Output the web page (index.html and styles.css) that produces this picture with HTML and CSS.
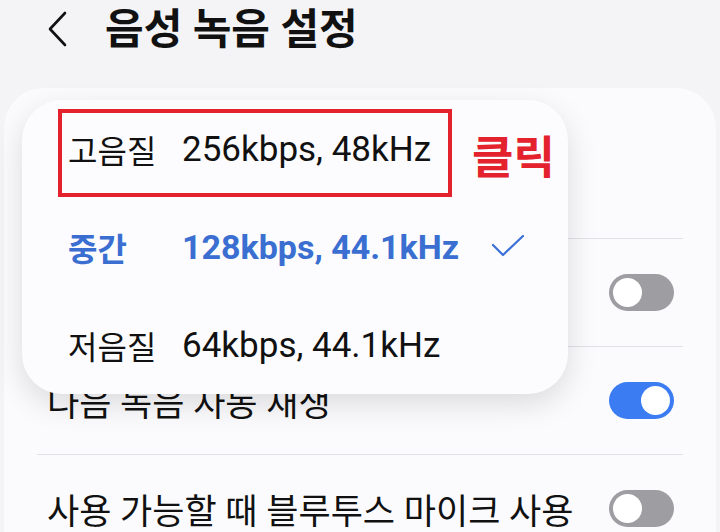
FILE: index.html
```html
<!DOCTYPE html>
<html lang="ko">
<head>
    <meta charset="UTF-8">
    <title>음성 녹음 설정</title>
    <link rel="stylesheet" href="styles.css">
</head>
<body>
    <div class="header">
        <svg class="back" width="24" height="36" viewBox="0 0 24 36">
            <path d="M19 2 L4 18 L19 34" fill="none" stroke="#111" stroke-width="2.6" stroke-linecap="round" stroke-linejoin="round"/>
        </svg>
        <h1>음성 녹음 설정</h1>
    </div>

    <div class="card">
        <div class="row row-tall"></div>
        <div class="row">
            <span class="toggle"></span>
        </div>
        <div class="row">
            <div class="row-text">다음 녹음 자동 재생</div>
            <span class="toggle on"></span>
        </div>
        <div class="row">
            <div class="row-text">사용 가능할 때 블루투스 마이크 사용</div>
            <span class="toggle"></span>
        </div>
    </div>

    <div class="popup">
        <div class="option">
            <span class="opt-label">고음질</span>
            <span class="opt-value">256kbps, 48kHz</span>
        </div>
        <div class="option selected">
            <span class="opt-label">중간</span>
            <span class="opt-value">128kbps, 44.1kHz</span>
            <svg class="check" width="34" height="24" viewBox="0 0 34 24">
                <path d="M2 11 L12 21 L32 2" fill="none" stroke="#3a70d6" stroke-width="2.2" stroke-linecap="round" stroke-linejoin="round"/>
            </svg>
        </div>
        <div class="option">
            <span class="opt-label">저음질</span>
            <span class="opt-value">64kbps, 44.1kHz</span>
        </div>
        <div class="mark"></div>
        <div class="mark-text">클릭</div>
    </div>
</body>
</html>
```

FILE: styles.css
```css
body { margin: 0; width: 720px; height: 532px; overflow: hidden; background: #f4f4f7; font-family: Roboto, "Noto Sans CJK KR", sans-serif; color: #111; position: relative; }

.header { height: 88px; display: flex; align-items: flex-start; padding-left: 46px; box-sizing: border-box; }
.back { margin-top: 11px; }
h1 { margin: 0 0 0 35px; font-size: 42px; font-weight: 700; line-height: 60px; }

.card { margin: 0 4px; background: #fbfbfd; border-radius: 40px 40px 0 0; padding: 0 33px; height: 444px; overflow: hidden; }
.row { height: 107px; display: flex; align-items: center; justify-content: space-between; padding: 0 9px 0 10px; border-top: 1px solid #e2e2e6; font-size: 35px; }
.row .toggle { margin-left: auto; }
.row-tall { height: 150px; border-top: none; }
.row-text { white-space: nowrap; }

.toggle { width: 65px; height: 37px; border-radius: 19px; background: #9d9da2; position: relative; flex: none; }
.toggle::after { content: ""; position: absolute; left: 4px; top: 4px; width: 29px; height: 29px; border-radius: 50%; background: #fff; }
.toggle.on { background: #3c7cf3; }
.toggle.on::after { left: 32px; }

.popup { position: absolute; left: 22px; top: 100px; width: 546px; height: 294px; background: #fcfcfe; border-radius: 40px; box-shadow: 0 10px 30px rgba(0,0,0,0.13); }
.option { height: 98px; display: flex; align-items: center; padding-left: 46px; position: relative; }
.opt-label { width: 114px; font-size: 32px; }
.opt-value { font-size: 35px; }
.selected { color: #3a6fd1; font-weight: 700; }
.selected .opt-value { font-size: 34px; }
.check { position: absolute; left: 469px; top: 36px; }

.mark { position: absolute; left: 36px; top: 9px; width: 394px; height: 88px; border: 4px solid #e3222e; box-sizing: border-box; }
.mark-text { position: absolute; left: 450px; top: 36px; font-size: 45px; line-height: 45px; font-weight: 700; color: #e3222e; }
```
